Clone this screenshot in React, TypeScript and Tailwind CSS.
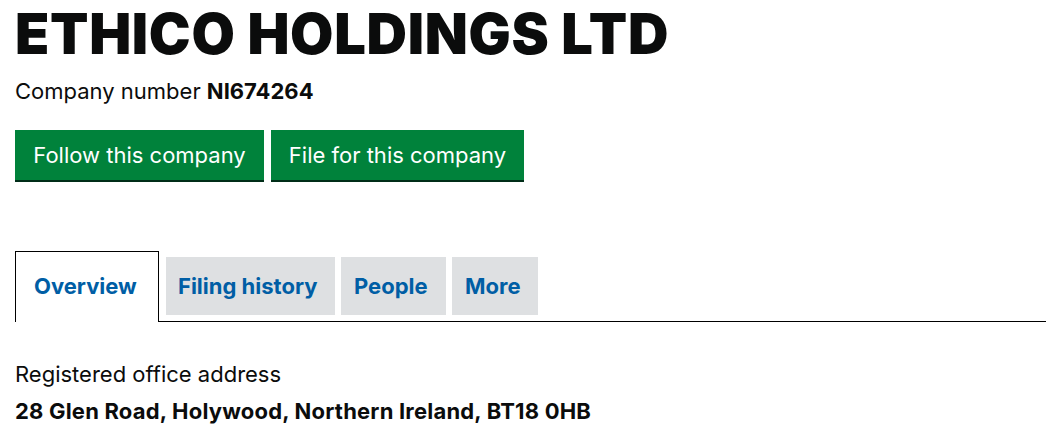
import React from "react";

export default function App() {
  return (
    <div className="w-[1046px] h-[443px] bg-white overflow-hidden pl-[15px] text-[#0b0c0c]" style={{ fontFamily: "Inter, 'Liberation Sans', sans-serif" }}>
      <h1 className="text-[56px] font-black leading-none pt-[6px] whitespace-nowrap tracking-[0.7px]">ETHICO HOLDINGS LTD</h1>
      <p className="text-[22px] mt-[16px] leading-[26px]">
        Company number <strong className="font-bold">NI674264</strong>
      </p>
      <div className="flex gap-[7px] mt-[26px]">
        <button className="h-[50px] w-[249px] bg-[#00823b] text-white text-[22px] shadow-[0_2px_0_#002d18] leading-none">
          Follow this company
        </button>
        <button className="h-[50px] w-[253px] bg-[#00823b] text-white text-[22px] shadow-[0_2px_0_#002d18] leading-none">
          File for this company
        </button>
      </div>
      <div className="flex items-end mt-[71px] border-b border-black h-[71px]">
        <div className="h-[71px] w-[144px] border border-b-0 border-black bg-white -mb-px flex items-center pl-[18px] text-[22px] font-bold text-[#005ea5] pb-[1px]">
          Overview
        </div>
        <div className="flex gap-[6px] ml-[7px] mb-[6px]">
          <div className="h-[58px] w-[169px] bg-[#dee0e2] flex items-center pl-[12px] text-[22px] font-bold text-[#005ea5]">Filing history</div>
          <div className="h-[58px] w-[105px] bg-[#dee0e2] flex items-center pl-[13px] text-[22px] font-bold text-[#005ea5]">People</div>
          <div className="h-[58px] w-[86px] bg-[#dee0e2] flex items-center pl-[13px] text-[22px] font-bold text-[#005ea5]">More</div>
        </div>
      </div>
      <p className="text-[22px] mt-[39px] leading-[26px]">Registered office address</p>
      <p className="text-[22px] font-bold mt-[11px] leading-[26px] tracking-[0.2px]">28 Glen Road, Holywood, Northern Ireland, BT18 0HB</p>
    </div>
  );
}
